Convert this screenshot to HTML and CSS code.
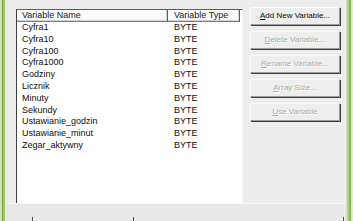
FILE: index.html
```html
<!DOCTYPE html>
<html>
<head>
<meta charset="utf-8">
<link rel="stylesheet" href="styles.css">
</head>
<body>
<div class="window">
  <div class="frame-left"></div>
  <div class="dialog">
    <div class="main">
      <div class="listview">
        <div class="lv-header">
          <div class="hcell col-name">Variable Name</div>
          <div class="hcell col-type">Variable Type</div>
        </div>
        <div class="lv-rows">
          <div class="row"><span class="c-name">Cyfra1</span><span class="c-type">BYTE</span></div>
          <div class="row"><span class="c-name">Cyfra10</span><span class="c-type">BYTE</span></div>
          <div class="row"><span class="c-name">Cyfra100</span><span class="c-type">BYTE</span></div>
          <div class="row"><span class="c-name">Cyfra1000</span><span class="c-type">BYTE</span></div>
          <div class="row"><span class="c-name">Godziny</span><span class="c-type">BYTE</span></div>
          <div class="row"><span class="c-name">Licznik</span><span class="c-type">BYTE</span></div>
          <div class="row"><span class="c-name">Minuty</span><span class="c-type">BYTE</span></div>
          <div class="row"><span class="c-name">Sekundy</span><span class="c-type">BYTE</span></div>
          <div class="row"><span class="c-name">Ustawianie_godzin</span><span class="c-type">BYTE</span></div>
          <div class="row"><span class="c-name">Ustawianie_minut</span><span class="c-type">BYTE</span></div>
          <div class="row"><span class="c-name">Zegar_aktywny</span><span class="c-type">BYTE</span></div>
        </div>
      </div>
      <div class="buttons">
        <div class="btn"><u>A</u>dd New Variable...</div>
        <div class="btn disabled"><u>D</u>elete Variable...</div>
        <div class="btn disabled"><u>R</u>ename Variable...</div>
        <div class="btn disabled"><u>A</u>rray Size...</div>
        <div class="btn disabled"><u>U</u>se Variable</div>
      </div>
    </div>
    <div class="footer">
      <div class="foot-left"><span class="tick t1"></span><span class="tick t2"></span></div>
      <div class="foot-right"><span class="tick t3"></span></div>
    </div>
  </div>
  <div class="frame-right"></div>
</div>
</body>
</html>
```

FILE: styles.css
```css
html, body {
  margin: 0;
  padding: 0;
  background: #ececec;
}
body {
  font-family: "Liberation Sans", Arial, sans-serif;
  font-size: 9px;
  color: #0e0e0e;
}
.window {
  display: flex;
  width: 353px;
  height: 221px;
  overflow: hidden;
}
.frame-left {
  width: 6px;
  flex: none;
  background: linear-gradient(to right, #d2e4ac 0, #d2e4ac 2px, #7c9f4c 2px, #7c9f4c 3px, #a6c66e 3px, #a6c66e 5px, #e2ead6 5px);
}
.frame-right {
  width: 7px;
  flex: none;
  background: linear-gradient(to right, #dfe6d4 0, #b6d088 2px, #9cc05c 3px, #8fb650 5px, #cfe2b0 5px, #e8f0dc 7px);
}
.dialog {
  flex: 1;
  display: flex;
  flex-direction: column;
  background: #ededed;
}
.main {
  display: flex;
  padding: 7px 0 0 10px;
  height: 203px;
  box-sizing: border-box;
}
.listview {
  margin-top: 2px;
  width: 227px;
  height: 199px;
  box-sizing: border-box;
  background: #fff;
  border-top: 1px solid #5c5c5c;
  border-left: 1px solid #3e3e3e;
  border-right: 1px solid #f4f4f4;
  border-bottom: 1px solid #dcdcdc;
  display: flex;
  flex-direction: column;
}
.lv-header {
  display: flex;
  height: 12px;
  flex: none;
}
.hcell {
  box-sizing: border-box;
  height: 12px;
  line-height: 11px;
  background: #fafafa;
  border-right: 1px solid #5a5a5a;
  border-bottom: 1px solid #7a7a7a;
  box-shadow: inset -1px -1px 0 #d0d0d0;
  color: #1a1a1a;
}
.col-name {
  width: 151px;
  padding-left: 5px;
}
.col-type {
  flex: 1;
  padding-left: 6px;
  margin-right: 2px;
}
.row {
  display: flex;
  height: 11.8px;
  line-height: 11.8px;
}
.c-name {
  width: 151px;
  padding-left: 5px;
  box-sizing: border-box;
}
.c-type {
  padding-left: 6px;
}
.buttons {
  margin-left: 7px;
  width: 90px;
  display: flex;
  flex-direction: column;
  gap: 6px;
}
.btn {
  height: 18px;
  box-sizing: border-box;
  background: #eeeeee;
  border-top: 1px solid #fbfbfb;
  border-left: 1px solid #fbfbfb;
  border-right: 1px solid #9a9a9a;
  border-bottom: 1px solid #9a9a9a;
  box-shadow: 1px 1px 0 #3c3c3c;
  font-size: 8px;
  line-height: 16px;
  text-align: center;
  color: #080808;
}
.btn.disabled {
  color: #a9a9a9;
  text-shadow: 1px 1px 0 #ffffff;
}
.footer {
  flex: 1;
  display: flex;
  border-top: 1px solid #f8f8f8;
  background: #e9e9e9;
}
.foot-left {
  width: 237px;
  display: flex;
  align-items: flex-end;
}
.foot-right {
  flex: 1;
  display: flex;
  align-items: flex-end;
  justify-content: flex-end;
}
.tick {
  width: 1px;
  height: 4px;
  background: #4a4a4a;
}
.t1 { margin-left: 26px; }
.t2 { margin-left: 100px; }
.t3 { margin-right: 2px; }
```
